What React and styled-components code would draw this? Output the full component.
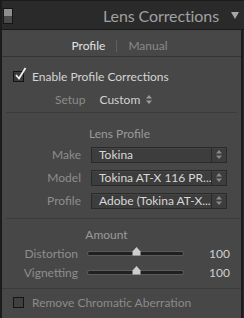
import React from "react";
import styled, { createGlobalStyle } from "styled-components";

const GlobalStyle = createGlobalStyle`
  html, body {
    margin: 0;
    padding: 0;
    background: #2b2b2b;
  }
  body {
    font-family: Lato, "Liberation Sans", sans-serif;
  }
`;

const Frame = styled.div`
  width: 244px;
  height: 318px;
  overflow: hidden;
  display: flex;
  flex-direction: column;
  background: #2b2b2b;
  border-left: 2px solid #1c1c1c;
  box-sizing: border-box;
`;

const Header = styled.div`
  height: 30px;
  flex-shrink: 0;
  box-sizing: border-box;
  border-top: 1px solid #1a1a1a;
  border-bottom: 1px solid #1a1a1a;
  background: #2a2a2a;
  display: flex;
  align-items: center;
  padding: 0 5px 0 1px;
`;

const Switch = styled.div`
  width: 8px;
  height: 14px;
  border: 1px solid #161616;
  display: flex;
  flex-direction: column;
  margin-top: 1px;
`;

const SwitchHalf = styled.div`
  flex: 1;
  background: ${(p) => (p.on ? "#8e8e8e" : "#4a4a4a")};
`;

const Title = styled.div`
  margin-left: auto;
  color: #a0a0a0;
  font-size: 16px;
  letter-spacing: -0.1px;
`;

const Arrow = styled.div`
  width: 0;
  height: 0;
  margin-left: 12px;
  border-left: 4px solid transparent;
  border-right: 4px solid transparent;
  border-top: 7px solid #a6a6a6;
`;

const Panel = styled.div`
  flex: 1;
  background: #474747;
  border-right: 2px solid #1c1c1c;
  margin-right: 1px;
  display: flex;
  flex-direction: column;
`;

const Tabs = styled.div`
  height: 27px;
  box-sizing: border-box;
  padding: 5px 4px 0 0;
  flex-shrink: 0;
  display: flex;
  align-items: center;
  justify-content: center;
  gap: 11px;
  font-size: 12px;
  border-bottom: 1px solid #353535;
`;

const Tab = styled.span`
  color: ${(p) => (p.active ? "#e2e2e2" : "#8a8a8a")};
`;

const TabSep = styled.span`
  width: 1px;
  height: 12px;
  background: #5e5e5e;
`;

const CheckRow = styled.div`
  height: 14px;
  margin-top: ${(p) => p.mt}px;
  display: flex;
  align-items: center;
  padding-left: 11px;
  gap: 8px;
  font-size: 12px;
  color: ${(p) => (p.dim ? "#8b8b8b" : "#d4d4d4")};
`;

const Box = styled.div`
  width: 9px;
  height: 9px;
  border: 1px solid #141414;
  background: ${(p) => (p.checked ? "#3c3c3c" : "#404040")};
  position: relative;
`;

const Tick = styled.svg`
  position: absolute;
  left: 1px;
  top: -5px;
`;

const SetupRow = styled.div`
  height: 14px;
  margin-top: 9px;
  display: flex;
  align-items: center;
  font-size: 12px;
  padding-left: 53px;
`;

const SetupLabel = styled.span`
  color: #8b8b8b;
  margin-right: 14px;
`;

const SetupValue = styled.span`
  color: #d2d2d2;
  display: flex;
  align-items: center;
  gap: 6px;
`;

const Divider = styled.div`
  height: 1px;
  flex-shrink: 0;
  background: #3b3b3b;
  margin: ${(p) => p.m};
`;

const SectionTitle = styled.div`
  height: 14px;
  margin-top: ${(p) => p.mt}px;
  display: flex;
  align-items: center;
  justify-content: center;
  padding-right: ${(p) => p.pr}px;
  color: #9a9a9a;
  font-size: 12px;
`;

const SelectRow = styled.div`
  height: 23px;
  margin-top: ${(p) => p.mt || 0}px;
  display: grid;
  grid-template-columns: 79px 136px;
  align-items: center;
  column-gap: 10px;
  font-size: 12px;
`;

const SliderRow = styled.div`
  height: 19px;
  margin-top: ${(p) => p.mt || 0}px;
  display: grid;
  grid-template-columns: 76px 95px 1fr;
  align-items: center;
  column-gap: 10px;
  font-size: 12px;
`;

const Label = styled.span`
  color: #8e8e8e;
  text-align: right;
`;

const Select = styled.div`
  height: 16px;
  box-sizing: border-box;
  border: 1px solid #2a2a2a;
  background: #3d3d3d;
  box-shadow: inset 0 1px 0 #454545;
  display: flex;
  align-items: center;
  color: #d8d8d8;
`;

const SelectText = styled.span`
  flex: 1;
  padding-left: 7px;
  white-space: nowrap;
  overflow: hidden;
`;

const SelectArrows = styled.span`
  width: 14px;
  height: 100%;
  border-left: 1px solid #2a2a2a;
  display: flex;
  align-items: center;
  justify-content: center;
`;

const Track = styled.div`
  position: relative;
  height: 3px;
  border-radius: 2px;
  background: #202020;
  box-shadow: 0 0 0 1px #5b5b5b;
`;

const Thumb = styled.svg`
  position: absolute;
  top: -5px;
  left: ${(p) => p.pos}%;
  margin-left: -4px;
`;

const Value = styled.span`
  color: #cfcfcf;
  text-align: right;
  padding-right: 11px;
`;

const UpDown = ({ color = "#9c9c9c" }) => (
  <svg width="6" height="9" viewBox="0 0 6 9">
    <path d="M3 0 L6 3.5 H0 Z M3 9 L6 5.5 H0 Z" fill={color} />
  </svg>
);

const Dropdown = ({ label, value, mt }) => (
  <SelectRow mt={mt}>
    <Label>{label}</Label>
    <Select>
      <SelectText>{value}</SelectText>
      <SelectArrows>
        <UpDown color="#8a8a8a" />
      </SelectArrows>
    </Select>
  </SelectRow>
);

const Slider = ({ label, value, pos, mt }) => (
  <SliderRow mt={mt}>
    <Label>{label}</Label>
    <Track>
      <Thumb pos={pos} width="9" height="9" viewBox="0 0 9 9">
        <path d="M4.5 0 L8.5 4.5 V8.5 H0.5 V4.5 Z" fill="#cdcdcd" />
      </Thumb>
    </Track>
    <Value>{value}</Value>
  </SliderRow>
);

const App = () => {
  return (
    <>
      <GlobalStyle />
      <Frame>
        <Header>
          <Switch>
            <SwitchHalf on />
            <SwitchHalf />
          </Switch>
          <Title>Lens Corrections</Title>
          <Arrow />
        </Header>
        <Panel>
          <Tabs>
            <Tab active>Profile</Tab>
            <TabSep />
            <Tab>Manual</Tab>
          </Tabs>
          <CheckRow mt={12}>
            <Box checked>
              <Tick width="12" height="14" viewBox="0 0 12 14">
                <path d="M1 8 L4 11.5 L10.5 1" stroke="#f0f0f0" strokeWidth="1.8" fill="none" />
              </Tick>
            </Box>
            Enable Profile Corrections
          </CheckRow>
          <SetupRow>
            <SetupLabel>Setup</SetupLabel>
            <SetupValue>
              Custom <UpDown />
            </SetupValue>
          </SetupRow>
          <Divider m="6px 4px 0 4px" />
          <SectionTitle mt={13} pr={4}>Lens Profile</SectionTitle>
          <Dropdown label="Make" value="Tokina" mt={3} />
          <Dropdown label="Model" value="Tokina AT-X 116 PR..." />
          <Dropdown label="Profile" value="Adobe (Tokina AT-X..." />
          <Divider m="6px 0 0 4px" />
          <SectionTitle mt={8} pr={30}>Amount</SectionTitle>
          <Slider label="Distortion" value="100" pos={50} mt={3} />
          <Slider label="Vignetting" value="100" pos={50} />
          <Divider m="6px 0 0 0" />
          <CheckRow mt={6} dim>
            <Box />
            Remove Chromatic Aberration
          </CheckRow>
        </Panel>
      </Frame>
    </>
  );
};

export default App;
